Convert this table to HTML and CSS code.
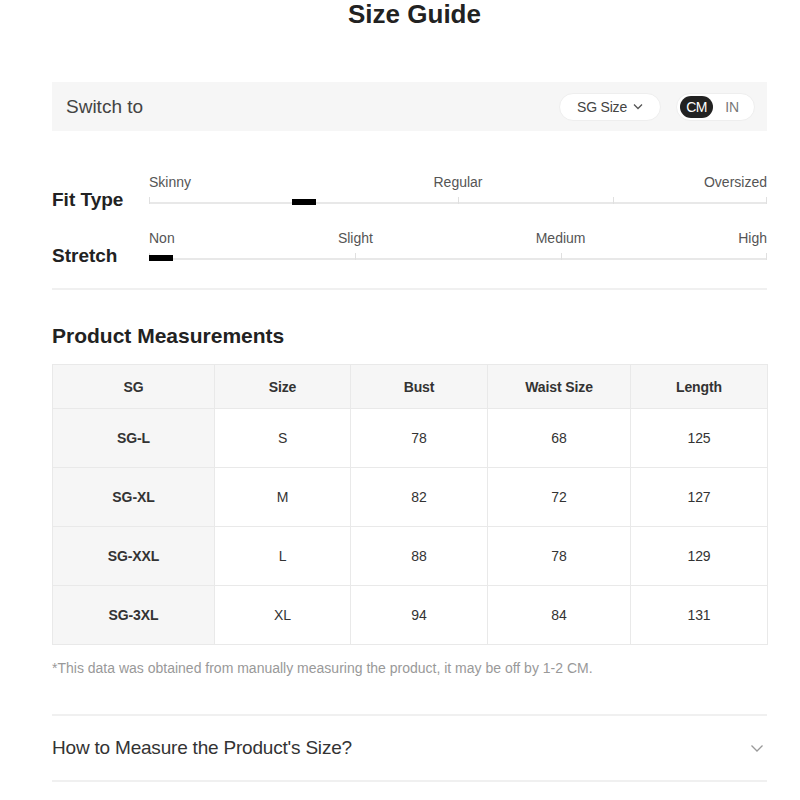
FILE: index.html
```html
<!DOCTYPE html>
<html>
<head>
<meta charset="utf-8">
<link rel="stylesheet" href="styles.css">
</head>
<body>
<div class="page">
  <h1 class="title">Size Guide</h1>

  <div class="switchbar">
    <span class="switch-label">Switch to</span>
    <div class="switch-controls">
      <div class="pill select">SG Size
        <svg class="chev-sm" width="10" height="7" viewBox="0 0 10 7"><path d="M1 1.5l4 4 4-4" fill="none" stroke="#555" stroke-width="1.3"/></svg>
      </div>
      <div class="pill unit">
        <span class="unit-on">CM</span>
        <span class="unit-off">IN</span>
      </div>
    </div>
  </div>

  <div class="fit">
    <div class="fit-row">
      <div class="fit-label">Fit Type</div>
      <div class="scale">
        <div class="scale-labels">
          <span class="sl" style="left:0">Skinny</span>
          <span class="sl mid" style="left:50%">Regular</span>
          <span class="sl end" style="left:100%">Oversized</span>
        </div>
        <div class="track">
          <i class="tick" style="left:0"></i>
          <i class="tick" style="left:50%"></i>
          <i class="tick" style="left:75%"></i>
          <i class="tick" style="left:100%"></i>
          <b class="marker" style="left:23.1%"></b>
        </div>
      </div>
    </div>
    <div class="fit-row">
      <div class="fit-label">Stretch</div>
      <div class="scale">
        <div class="scale-labels">
          <span class="sl" style="left:0">Non</span>
          <span class="sl mid" style="left:33.4%">Slight</span>
          <span class="sl mid" style="left:66.6%">Medium</span>
          <span class="sl end" style="left:100%">High</span>
        </div>
        <div class="track">
          <i class="tick" style="left:0"></i>
          <i class="tick" style="left:33.4%"></i>
          <i class="tick" style="left:66.6%"></i>
          <i class="tick" style="left:100%"></i>
          <b class="marker" style="left:0"></b>
        </div>
      </div>
    </div>
  </div>

  <h2 class="section">Product Measurements</h2>

  <table class="sizes">
    <colgroup>
      <col style="width:162px"><col style="width:136px"><col style="width:137px"><col style="width:143px"><col>
    </colgroup>
    <thead>
      <tr><th>SG</th><th>Size</th><th>Bust</th><th>Waist Size</th><th>Length</th></tr>
    </thead>
    <tbody>
      <tr><th>SG-L</th><td>S</td><td>78</td><td>68</td><td>125</td></tr>
      <tr><th>SG-XL</th><td>M</td><td>82</td><td>72</td><td>127</td></tr>
      <tr><th>SG-XXL</th><td>L</td><td>88</td><td>78</td><td>129</td></tr>
      <tr><th>SG-3XL</th><td>XL</td><td>94</td><td>84</td><td>131</td></tr>
    </tbody>
  </table>

  <p class="note">*This data was obtained from manually measuring the product, it may be off by 1-2 CM.</p>

  <div class="accordion">
    <span>How to Measure the Product's Size?</span>
    <svg width="14" height="9" viewBox="0 0 14 9"><path d="M1.5 1.5l5.5 5.5 5.5-5.5" fill="none" stroke="#999" stroke-width="1.3"/></svg>
  </div>
</div>
</body>
</html>
```

FILE: styles.css
```css
html, body {
  margin: 0;
  padding: 0;
  background: #fff;
}
body {
  font-family: "Liberation Sans", Arial, sans-serif;
  color: #222;
}
.page {
  width: 715px;
  margin: 0 0 0 52px;
}
.title {
  margin: 0;
  padding-top: 1px;
  padding-left: 10px;
  text-align: center;
  font-size: 26px;
  line-height: 26px;
  font-weight: bold;
  color: #222;
}
.switchbar {
  margin-top: 55px;
  height: 49px;
  background: #f6f6f6;
  display: flex;
  align-items: center;
  justify-content: space-between;
  padding: 0 12px 0 14px;
}
.switch-label {
  font-size: 19px;
  color: #444;
}
.switch-controls {
  display: flex;
  gap: 15px;
  align-items: center;
}
.pill {
  background: #fff;
  border: 1px solid #eee;
  border-radius: 15px;
  box-sizing: border-box;
  display: flex;
  align-items: center;
  height: 28px;
}
.select {
  width: 102px;
  justify-content: center;
  gap: 6px;
  font-size: 14px;
  color: #444;
  letter-spacing: -0.2px;
}
.unit {
  width: 79px;
  padding: 0 3px;
}
.unit-on {
  background: #222;
  color: #fff;
  border-radius: 11px;
  width: 33px;
  height: 22px;
  display: flex;
  align-items: center;
  justify-content: center;
  font-size: 14px;
  letter-spacing: -0.6px;
}
.unit-off {
  flex: 1;
  text-align: center;
  font-size: 14px;
  color: #777;
  letter-spacing: -0.3px;
}
.fit {
  padding-top: 43px;
  padding-bottom: 28px;
  border-bottom: 2px solid #f0f0f0;
  display: flex;
  flex-direction: column;
  gap: 26px;
}
.fit-row {
  display: flex;
  align-items: flex-end;
}
.fit-label {
  width: 97px;
  font-size: 19px;
  font-weight: bold;
  color: #222;
  line-height: 20px;
  margin-bottom: -6px;
}
.scale {
  flex: 1;
}
.scale-labels {
  position: relative;
  height: 17px;
  line-height: 17px;
  font-size: 14px;
  color: #555;
}
.sl {
  position: absolute;
  top: 0;
  white-space: nowrap;
}
.sl.mid { transform: translateX(-50%); }
.sl.end { transform: translateX(-100%); }
.track {
  position: relative;
  margin-top: 11px;
  height: 2px;
  background: #e8e8e8;
}
.tick {
  position: absolute;
  top: -5px;
  width: 1px;
  height: 7px;
  background: #e0e0e0;
}
.tick:last-of-type { margin-left: -1px; }
.marker {
  position: absolute;
  top: -3px;
  width: 24px;
  height: 6px;
  background: #000;
}
.section {
  margin: 34px 0 0 0;
  font-size: 21px;
  line-height: 24px;
  font-weight: bold;
  color: #222;
}
.sizes {
  margin-top: 16px;
  width: 716px;
  border-collapse: collapse;
  table-layout: fixed;
  font-size: 14px;
  color: #333;
}
.sizes th, .sizes td {
  border: 1px solid #e9e9e9;
  text-align: center;
  padding: 0;
  letter-spacing: -0.1px;
}
.sizes thead th {
  background: #f6f6f6;
  height: 43px;
  font-weight: bold;
}
.sizes tbody th {
  background: #f6f6f6;
  font-weight: bold;
}
.sizes tbody td, .sizes tbody th {
  height: 58px;
}
.note {
  margin: 15px 0 0 0;
  font-size: 14px;
  line-height: 16px;
  color: #999;
}
.accordion {
  margin-top: 38px;
  border-top: 2px solid #f0f0f0;
  border-bottom: 2px solid #f0f0f0;
  height: 64px;
  display: flex;
  align-items: center;
  justify-content: space-between;
  font-size: 19px;
  color: #333;
  letter-spacing: -0.2px;
  padding-right: 3px;
}
```
